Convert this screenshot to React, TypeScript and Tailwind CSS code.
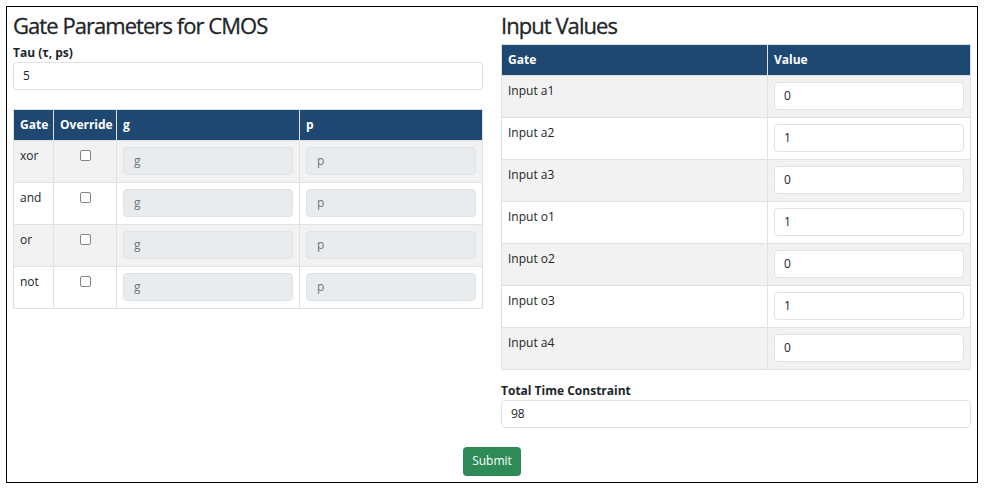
import React from "react";

const font = { fontFamily: '"Open Sans", "Noto Sans", sans-serif' };

const gates = ["xor", "and", "or", "not"];
const inputs: [string, string][] = [
  ["Input a1", "0"],
  ["Input a2", "1"],
  ["Input a3", "0"],
  ["Input o1", "1"],
  ["Input o2", "0"],
  ["Input o3", "1"],
  ["Input a4", "0"],
];

export default function App() {
  return (
    <div className="bg-white w-[984px] h-[488px] pt-[6px] px-[6px] text-[#212529]" style={font}>
      <div className="border border-black px-[6px] pb-[6px]">
        <div className="grid grid-cols-2 gap-[18px]">
          {/* Left column */}
          <div>
            <h2 className="text-[22px] leading-[28.8px] font-normal mt-[4px] mb-[4px] tracking-[-0.95px] [-webkit-text-stroke:0.3px_#212529]">
              Gate Parameters for CMOS
            </h2>
            <div className="text-[12px] leading-[18px] font-bold">Tau (τ, ps)</div>
            <input
              readOnly
              value="5"
              className="block w-full h-[28px] border border-[#dee2e6] rounded-[4px] px-[9px] text-[12px] bg-white outline-none"
            />
            <table className="mt-[19px] w-full table-fixed border-collapse text-[12px] leading-[18px]">
              <colgroup>
                <col className="w-[40px]" />
                <col className="w-[63px]" />
                <col className="w-[183px]" />
                <col />
              </colgroup>
              <thead>
                <tr className="bg-[#1e4772] text-white text-left">
                  <th className="border border-[#dee2e6] px-[6px] py-[6px] font-bold">Gate</th>
                  <th className="border border-[#dee2e6] px-[6px] py-[6px] font-bold">Override</th>
                  <th className="border border-[#dee2e6] px-[6px] py-[6px] font-bold">g</th>
                  <th className="border border-[#dee2e6] px-[6px] py-[6px] font-bold">p</th>
                </tr>
              </thead>
              <tbody>
                {gates.map((g, i) => (
                  <tr key={g} className={i % 2 === 0 ? "bg-[#f2f2f2]" : "bg-white"}>
                    <td className="border border-[#dee2e6] px-[6px] pt-[6px] pb-[7px] align-top">{g}</td>
                    <td className="border border-[#dee2e6] px-[6px] pt-[6px] pb-[7px] align-top">
                      <div className="flex justify-center h-[18px] items-center">
                        <span className="block w-[11px] h-[11px] border border-[#858585] rounded-[2px] bg-white" />
                      </div>
                    </td>
                    <td className="border border-[#dee2e6] px-[6px] pt-[6px] pb-[7px] align-top">
                      <input
                        disabled
                        placeholder="g"
                        className="block w-full h-[28px] border border-[#dee2e6] rounded-[4px] px-[10px] text-[12px] bg-[#e9ecef] placeholder:text-[#6c757d] outline-none"
                      />
                    </td>
                    <td className="border border-[#dee2e6] px-[6px] pt-[6px] pb-[7px] align-top">
                      <input
                        disabled
                        placeholder="p"
                        className="block w-full h-[28px] border border-[#dee2e6] rounded-[4px] px-[10px] text-[12px] bg-[#e9ecef] placeholder:text-[#6c757d] outline-none"
                      />
                    </td>
                  </tr>
                ))}
              </tbody>
            </table>
          </div>

          {/* Right column */}
          <div>
            <h2 className="text-[22px] leading-[28.8px] font-normal mt-[4px] mb-[4px] tracking-[-0.95px] [-webkit-text-stroke:0.3px_#212529]">
              Input Values
            </h2>
            <table className="w-full table-fixed border-collapse text-[12px] leading-[18px]">
              <colgroup>
                <col className="w-[266px]" />
                <col />
              </colgroup>
              <thead>
                <tr className="bg-[#1e4772] text-white text-left">
                  <th className="border border-[#dee2e6] px-[6px] py-[6px] font-bold">Gate</th>
                  <th className="border border-[#dee2e6] px-[6px] py-[6px] font-bold">Value</th>
                </tr>
              </thead>
              <tbody>
                {inputs.map(([name, v], i) => (
                  <tr key={name} className={i % 2 === 0 ? "bg-[#f2f2f2]" : "bg-white"}>
                    <td className="border border-[#dee2e6] px-[6px] pt-[6px] pb-[7px] align-top">{name}</td>
                    <td className="border border-[#dee2e6] px-[6px] pt-[6px] pb-[7px] align-top">
                      <input
                        readOnly
                        value={v}
                        className="block w-full h-[28px] border border-[#dee2e6] rounded-[4px] px-[9px] text-[12px] bg-white outline-none"
                      />
                    </td>
                  </tr>
                ))}
              </tbody>
            </table>
            <div className="mt-[12px] text-[12px] leading-[18px] font-bold">Total Time Constraint</div>
            <input
              readOnly
              value="98"
              className="block w-full h-[28px] border border-[#dee2e6] rounded-[4px] px-[9px] text-[12px] bg-white outline-none"
            />
          </div>
        </div>
        <div className="flex justify-center mt-[19px]">
          <button className="h-[29px] px-[9px] rounded-[4px] bg-[#2e8b57] text-white text-[12px] leading-[18px]">
            Submit
          </button>
        </div>
      </div>
    </div>
  );
}
